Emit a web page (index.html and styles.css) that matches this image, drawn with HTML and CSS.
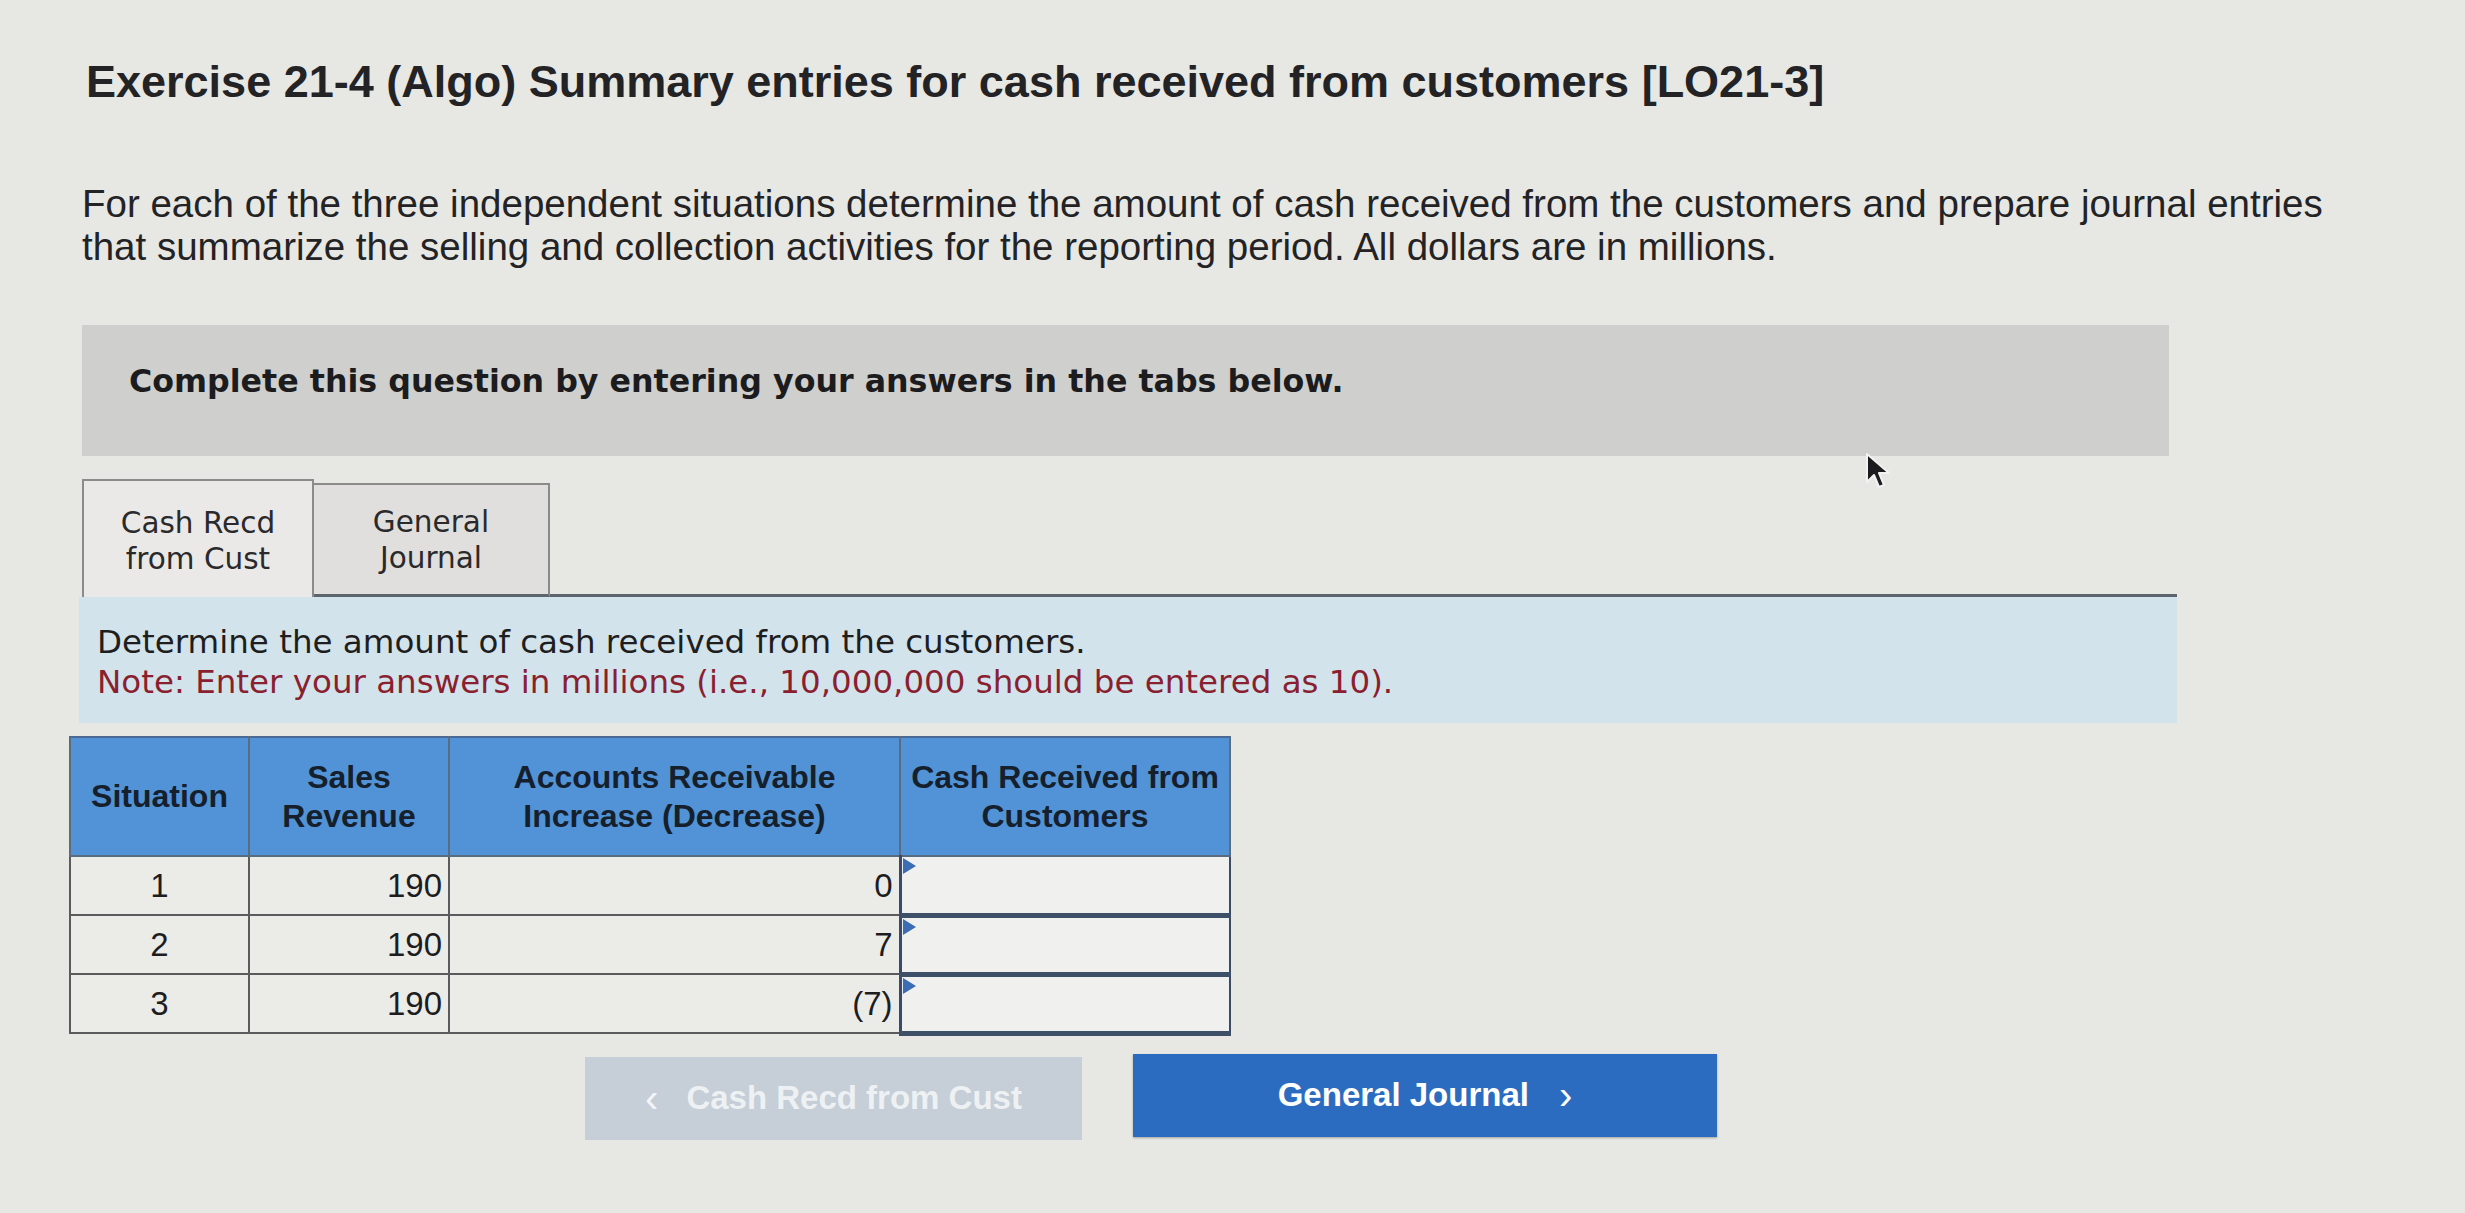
FILE: index.html
```html
<!DOCTYPE html>
<html lang="en">
<head>
<meta charset="utf-8">
<title>Exercise 21-4 (Algo)</title>
<link rel="stylesheet" href="styles.css">
</head>
<body>
<div class="page">
  <h1 class="title">Exercise 21-4 (Algo) Summary entries for cash received from customers [LO21-3]</h1>
  <p class="intro">For each of the three independent situations determine the amount of cash received from the customers and prepare journal entries that summarize the selling and collection activities for the reporting period. All dollars are in millions.</p>

  <div class="instructions">Complete this question by entering your answers in the tabs below.</div>

  <div class="tabs">
    <div class="tab tab-active">Cash Recd<br>from Cust</div>
    <div class="tab">General<br>Journal</div>
    <div class="tab-rest"></div>
  </div>

  <div class="prompt">
    <div>Determine the amount of cash received from the customers.</div>
    <div class="note">Note: Enter your answers in millions (i.e., 10,000,000 should be entered as 10).</div>
  </div>

  <table class="grid">
    <colgroup>
      <col class="w1">
      <col class="w2">
      <col class="w3">
      <col class="w4">
    </colgroup>
    <thead>
      <tr>
        <th>Situation</th>
        <th>Sales<br>Revenue</th>
        <th>Accounts Receivable<br>Increase (Decrease)</th>
        <th>Cash Received from<br>Customers</th>
      </tr>
    </thead>
    <tbody>
      <tr>
        <td class="ctr">1</td>
        <td class="num">190</td>
        <td class="num">0</td>
        <td class="input"><span class="flag"></span></td>
      </tr>
      <tr>
        <td class="ctr">2</td>
        <td class="num">190</td>
        <td class="num">7</td>
        <td class="input"><span class="flag"></span></td>
      </tr>
      <tr>
        <td class="ctr">3</td>
        <td class="num">190</td>
        <td class="num">(7)</td>
        <td class="input"><span class="flag"></span></td>
      </tr>
    </tbody>
  </table>

  <div class="nav">
    <div class="btn btn-prev"><span class="chev">&lsaquo;</span>Cash Recd from Cust</div>
    <div class="btn btn-next">General Journal<span class="chev chev-r">&rsaquo;</span></div>
  </div>

  <svg class="cursor" width="28" height="40" viewBox="0 0 28 40" aria-hidden="true">
    <path d="M3 2 L3 30 L10 23 L15 35 L20 33 L15 21 L25 21 Z" fill="#1c1c1e" stroke="#f2f2f2" stroke-width="2" stroke-linejoin="round"/>
  </svg>
</div>
</body>
</html>
```

FILE: styles.css
```css
html, body {
  margin: 0;
  padding: 0;
}
body {
  background: #e7e7e4;
  color: #1d1d1f;
  font-family: "Liberation Sans", Arial, sans-serif;
}
.page {
  position: relative;
  width: 2465px;
  height: 1213px;
  padding: 56px 0 0 82px;
  box-sizing: border-box;
  overflow: hidden;
}
.title {
  margin: 0 0 0 4px;
  font-size: 45px;
  line-height: 52px;
  font-weight: 700;
  color: #232325;
}
.intro {
  margin: 75px 0 0 0;
  width: 2270px;
  font-size: 38.5px;
  line-height: 42.5px;
  color: #232325;
}
.instructions {
  margin-top: 57px;
  width: 2087px;
  height: 131px;
  box-sizing: border-box;
  padding: 37px 0 0 47px;
  background: #cfcfcd;
  font-family: "DejaVu Sans", Verdana, sans-serif;
  font-weight: 700;
  font-size: 31.7px;
  line-height: 38px;
  color: #1c1c1e;
}
.tabs {
  display: flex;
  align-items: flex-end;
  margin-top: 23px;
  width: 2095px;
}
.tab {
  width: 236px;
  height: 114px;
  box-sizing: border-box;
  display: flex;
  align-items: center;
  justify-content: center;
  text-align: center;
  border: 2px solid #8b8b8b;
  border-bottom: 3px solid #5d666e;
  background: #e0dfdd;
  font-family: "DejaVu Sans", Verdana, sans-serif;
  font-size: 29.5px;
  line-height: 36px;
  color: #2a2a2c;
}
.tab-active {
  width: 232px;
  height: 118px;
  border-bottom: none;
  background: #eae9e7;
  padding-top: 4px;
}
.tab + .tab {
  border-left: none;
}
.tab-rest {
  flex: 1;
  border-bottom: 3px solid #5d666e;
}
.prompt {
  width: 2098px;
  height: 126px;
  box-sizing: border-box;
  margin-left: -3px;
  padding: 25px 0 0 18px;
  background: #d3e3ec;
  font-family: "DejaVu Sans", Verdana, sans-serif;
  font-size: 32.5px;
  line-height: 40px;
  color: #1e1e20;
}
.note {
  color: #8a1f30;
}
.grid {
  margin: 13px 0 0 -13px;
  width: 1160px;
  table-layout: fixed;
  border-collapse: collapse;
  font-family: "Liberation Sans", Arial, sans-serif;
  font-size: 33px;
  color: #1d1d1f;
}
.w1 { width: 179px; }
.w2 { width: 200px; }
.w3 { width: 451px; }
.w4 { width: 330px; }
.grid th {
  height: 117px;
  padding: 0 4px;
  background: #5193d6;
  font-weight: 700;
  font-size: 32px;
  line-height: 39px;
  color: #15202c;
  text-align: center;
  border: 2px solid #5a6c80;
  border-top: 2px solid #4a6a95;
  white-space: nowrap;
}
.grid td {
  height: 59px;
  box-sizing: border-box;
  padding: 0 10px;
  background: #ebebe8;
  border: 2px solid #5b5b5d;
  line-height: 34px;
}
.grid td.ctr { text-align: center; }
.grid td.num { text-align: right; padding-right: 6px; }
.grid td.input {
  position: relative;
  background: #f0f0ee;
  border: 2px solid #3a4a6a;
  border-bottom: 5px solid #3d5068;
  border-left: 3px solid #3a4a6a;
}
.flag {
  position: absolute;
  left: 1px;
  top: 1px;
  width: 0;
  height: 0;
  border-top: 8px solid transparent;
  border-bottom: 8px solid transparent;
  border-left: 13px solid #3a6db3;
}
.nav {
  display: flex;
  gap: 51px;
  margin: 18px 0 0 503px;
  align-items: flex-start;
}
.btn {
  display: flex;
  align-items: center;
  justify-content: center;
  height: 83px;
  box-sizing: border-box;
  font-family: "Liberation Sans", Arial, sans-serif;
  font-weight: 700;
  font-size: 33px;
}
.btn-prev {
  width: 497px;
  margin-top: 3px;
  background: #c6ced7;
  color: #eef1f4;
}
.btn-next {
  width: 584px;
  background: #2c6cc0;
  color: #ffffff;
  box-shadow: 0 1px 2px rgba(0,0,0,0.3);
}
.chev {
  font-weight: 400;
  font-size: 40px;
  margin-right: 28px;
  color: #f3f5f8;
}
.chev-r {
  margin-right: 0;
  margin-left: 30px;
  color: #ffffff;
}
.cursor {
  position: absolute;
  left: 1864px;
  top: 452px;
}
```
